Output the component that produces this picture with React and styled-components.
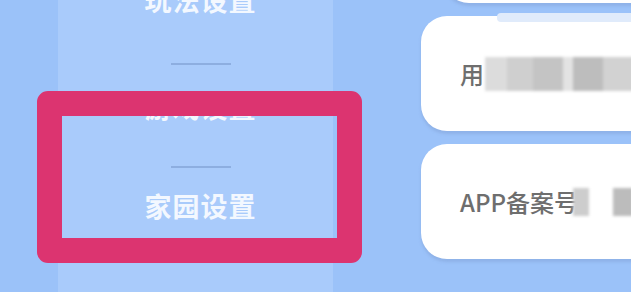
import React from 'react';
import styled, { createGlobalStyle } from 'styled-components';

const GlobalStyle = createGlobalStyle`
	html, body {
		margin: 0;
		padding: 0;
	}
	body {
		font-family: "Noto Sans CJK SC", "Noto Sans", sans-serif;
	}
	#root {
		width: 631px;
		height: 292px;
		overflow: hidden;
	}
`;

const Screen = styled.div`
	position: relative;
	display: flex;
	width: 631px;
	height: 292px;
	overflow: hidden;
	background-color: #9bc2f9;
`;

const Sidebar = styled.div`
	flex: 0 0 275px;
	margin-left: 58px;
	height: 100%;
	background-color: #a9cbfb;
	display: flex;
	flex-direction: column;
	align-items: center;
	overflow: hidden;
`;

const MenuList = styled.div`
	display: flex;
	flex-direction: column;
	align-items: center;
	margin-top: -15px;
	margin-left: 10px;
`;

const MenuItem = styled.div`
	display: flex;
	flex-direction: column;
	align-items: center;
`;

const MenuLabel = styled.div`
	height: 30px;
	line-height: 30px;
	font-size: 27px;
	font-weight: 700;
	color: #f3f8ff;
	letter-spacing: 1px;
	white-space: nowrap;
	transform: translateY(${(p) => p.$shift || 0}px);
`;

const Divider = styled.div`
	width: 60px;
	height: 2px;
	margin-top: 48px;
	margin-bottom: 23px;
	background-color: #8daee0;
`;

const Cards = styled.div`
	flex: 1;
	display: flex;
	flex-direction: column;
	gap: 13px;
	margin-top: -112px;
	margin-left: 88px;
	margin-right: -60px;
`;

const Card = styled.div`
	position: relative;
	height: 115px;
	margin-left: ${(p) => p.$indent || 0}px;
	border-radius: 26px;
	background-color: #ffffff;
	box-shadow: 0 3px 3px rgba(120, 150, 200, 0.35);
	display: flex;
	align-items: center;
	padding-left: 39px;
	gap: 1px;
`;

const Glare = styled.div`
	position: absolute;
	top: -3px;
	left: 76px;
	right: 0;
	height: 9px;
	border-radius: 4px;
	background-color: #e0ebfb;
`;

const CardText = styled.span`
	font-size: 24px;
	font-weight: 500;
	color: #6e6e6e;
	white-space: nowrap;
`;

const Mosaic = styled.div`
	display: flex;
	height: ${(p) => p.$h || 34}px;
	margin-left: ${(p) => p.$offset || 0}px;
	filter: blur(1.5px);
`;

const Cell = styled.div`
	width: ${(p) => p.$w}px;
	background-color: ${(p) => p.$c};
`;

const Highlight = styled.div`
	position: absolute;
	left: 37px;
	top: 91px;
	width: 275px;
	height: 122px;
	border: 25px solid #dc3470;
	border-radius: 11px;
`;

const menu = ['玩法设置', '游戏设置', '家园设置'];

const mosaicA = [
	['#dcdcdc', 22],
	['#cfcfcf', 26],
	['#c4c4c4', 30],
	['#e3e3e3', 10],
	['#bdbdbd', 30],
	['#d2d2d2', 40],
];

const mosaicB = [
	['#cdcdcd', 16],
	['#ffffff', 24],
	['#bcbcbc', 20],
];

function App() {
	return (
		<>
			<GlobalStyle />
			<Screen>
				<Sidebar>
					<MenuList>
						{menu.map((label, i) => (
							<MenuItem key={label}>
								<MenuLabel $shift={i === 1 ? 4 : 0}>{label}</MenuLabel>
								{i < menu.length - 1 && <Divider />}
							</MenuItem>
						))}
					</MenuList>
				</Sidebar>
				<Cards>
					<Card $indent={22} />
					<Card>
						<Glare />
						<CardText>用</CardText>
						<Mosaic>
							{mosaicA.map(([c, w], i) => (
								<Cell key={i} $c={c} $w={w} />
							))}
						</Mosaic>
					</Card>
					<Card>
						<CardText>APP备案号</CardText>
						<Mosaic $h={28} $offset={-6}>
							{mosaicB.map(([c, w], i) => (
								<Cell key={i} $c={c} $w={w} />
							))}
						</Mosaic>
					</Card>
				</Cards>
				<Highlight />
			</Screen>
		</>
	);
}

export default App;
